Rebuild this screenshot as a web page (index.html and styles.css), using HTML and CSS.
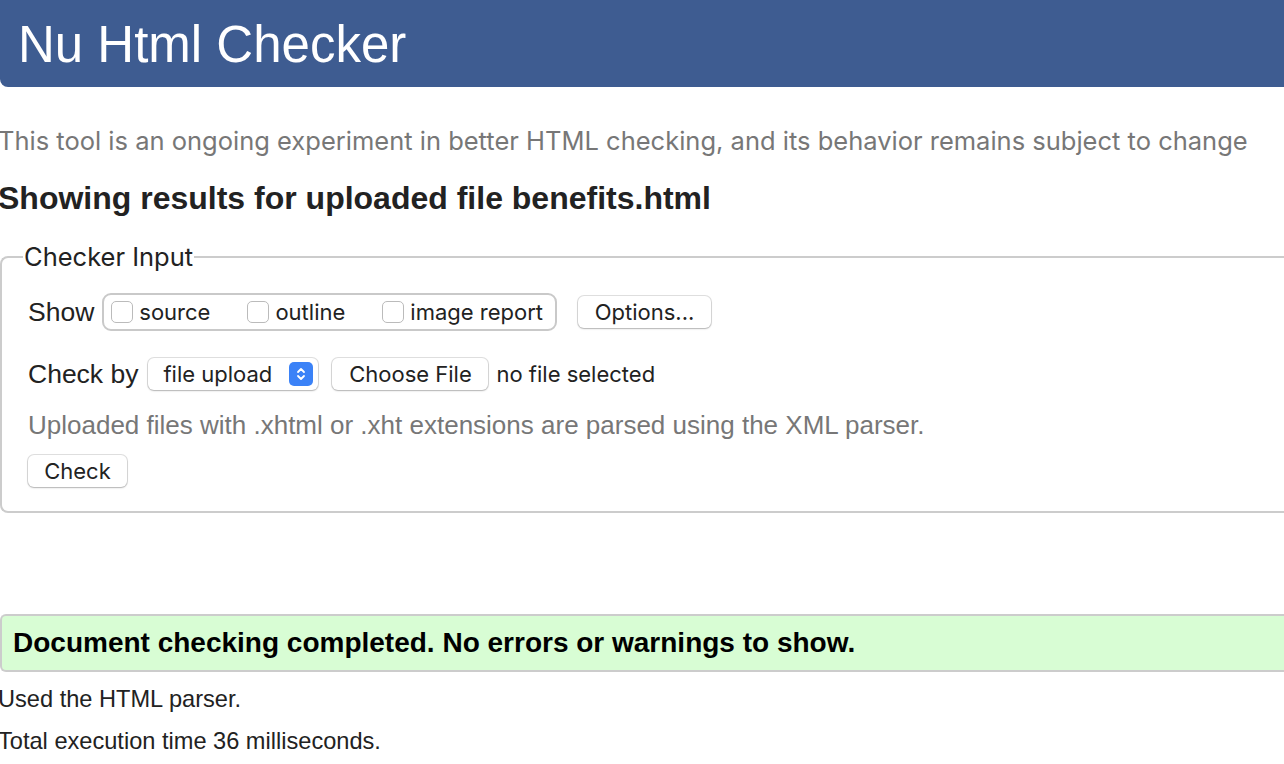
FILE: index.html
```html
<!DOCTYPE html>
<html>
<head>
<meta charset="utf-8">
<title>Nu Html Checker</title>
<link rel="stylesheet" href="styles.css">
</head>
<body>
<header class="masthead"><h1 class="title">Nu Html Checker</h1></header>
<main class="page">
  <p class="intro">This tool is an ongoing experiment in better HTML checking, and its behavior remains subject to change</p>
  <h2 class="results-head">Showing results for uploaded file benefits.html</h2>
  <fieldset class="input-set">
    <legend class="legend">Checker Input</legend>
    <div class="row show-row">
      <span class="label">Show</span>
      <div class="show-group">
        <label class="opt"><span class="box"></span>source</label>
        <label class="opt"><span class="box"></span>outline</label>
        <label class="opt"><span class="box"></span>image report</label>
      </div>
      <span class="btn btn-options">Options...</span>
    </div>
    <div class="row check-row">
      <span class="label">Check by</span>
      <span class="select">file upload<span class="arrows"><svg width="12" height="18" viewBox="0 0 12 18"><path d="M3 7 L6 4 L9 7 M3 11 L6 14 L9 11" fill="none" stroke="#fff" stroke-width="1.8" stroke-linecap="round" stroke-linejoin="round"/></svg></span></span>
      <span class="btn btn-file">Choose File</span>
      <span class="nofile">no file selected</span>
    </div>
    <p class="hint">Uploaded files with .xhtml or .xht extensions are parsed using the XML parser.</p>
    <span class="btn btn-check">Check</span>
  </fieldset>
  <div class="success">Document checking completed. No errors or warnings to show.</div>
  <p class="meta">Used the HTML parser.</p>
  <p class="meta meta-2">Total execution time 36 milliseconds.</p>
</main>
</body>
</html>
```
FILE: styles.css
```css
html, body { margin: 0; padding: 0; background: #fff; }
body { font-family: "Liberation Sans", Arial, sans-serif; color: #222; overflow: hidden; }
.masthead {
  background: #3e5c91;
  height: 87px;
  border-bottom-left-radius: 8px;
  display: flex;
  align-items: center;
  padding-left: 18px;
}
.title { margin: 0; font-weight: normal; color: #fff; font-size: 51px; line-height: 1; padding-top: 2px; }
.page { margin-left: -2px; }
.intro {
  margin: 39px 0 0 0;
  font-family: Inter, "Liberation Sans", sans-serif;
  font-size: 25.5px;
  color: #777;
  line-height: 30px;
  white-space: nowrap;
}
.results-head { margin: 25px 0 0 0; font-size: 32px; line-height: 34px; font-weight: bold; color: #222; }
.input-set {
  margin: 27px -20px 0 2px;
  border: 2px solid #ccc;
  border-right: none;
  border-radius: 8px 0 0 8px;
  padding: 21px 0 24px 26px;
}
.legend {
  font-family: Inter, "Liberation Sans", sans-serif;
  font-size: 25.5px;
  line-height: 30px;
  padding: 0 1px;
  color: #222;
  margin-left: -5px;
}
.row { display: flex; align-items: center; }
.label { font-size: 26.5px; color: #222; }
.show-group {
  margin-left: 8px;
  border: 2px solid #c9c9c9;
  border-radius: 9px;
  height: 38px;
  box-sizing: border-box;
  display: flex;
  align-items: center;
  padding: 0 12px 0 7px;
  gap: 37px;
}
.opt { display: flex; align-items: center; font-family: Inter, "Liberation Sans", sans-serif; font-size: 22px; color: #222; }
.box { width: 22px; height: 22px; border: 1px solid #bbb; border-radius: 5px; margin-right: 6px; box-sizing: border-box; background: #fff; }
.btn {
  font-family: Inter, "Liberation Sans", sans-serif;
  font-size: 22px;
  color: #222;
  background: #fff;
  border-radius: 6px;
  box-shadow: 0 0 0 1px rgba(0,0,0,0.12), 0 1px 2px rgba(0,0,0,0.2);
  height: 32px;
  display: inline-flex;
  align-items: center;
  justify-content: center;
  box-sizing: border-box;
}
.btn-options { margin-left: 21px; width: 133px; }
.check-row { margin-top: 27px; }
.select {
  margin-left: 10px;
  height: 32px;
  width: 170px;
  box-sizing: border-box;
  border-radius: 6px;
  box-shadow: 0 0 0 1px rgba(0,0,0,0.12), 0 1px 2px rgba(0,0,0,0.2);
  font-family: Inter, "Liberation Sans", sans-serif;
  font-size: 22px;
  display: flex;
  align-items: center;
  padding-left: 15px;
  position: relative;
}
.arrows {
  position: absolute;
  right: 5px;
  top: 4px;
  width: 24px;
  height: 24px;
  background: #3b82f7;
  border-radius: 5px;
  display: flex;
  align-items: center;
  justify-content: center;
}
.btn-file { margin-left: 14px; width: 156px; }
.nofile { margin-left: 8px; font-family: Inter, "Liberation Sans", sans-serif; font-size: 22px; color: #222; }
.hint { margin: 20px 0 0 0; font-size: 26px; color: #777; line-height: 30px; }
.btn-check { margin-top: 15px; width: 99px; }
.success {
  margin: 101px 0 0 2px;
  background: #d8fdd4;
  border: 2px solid #ccc;
  border-right: none;
  border-radius: 6px 0 0 6px;
  height: 58px;
  box-sizing: border-box;
  display: flex;
  align-items: center;
  padding-left: 11px;
  font-size: 28px;
  font-weight: bold;
  color: #000;
  white-space: nowrap;
}
.meta { margin: 13px 0 0 0; font-size: 23.6px; line-height: 28px; color: #222; }
.meta-2 { margin-top: 14px; }
```
